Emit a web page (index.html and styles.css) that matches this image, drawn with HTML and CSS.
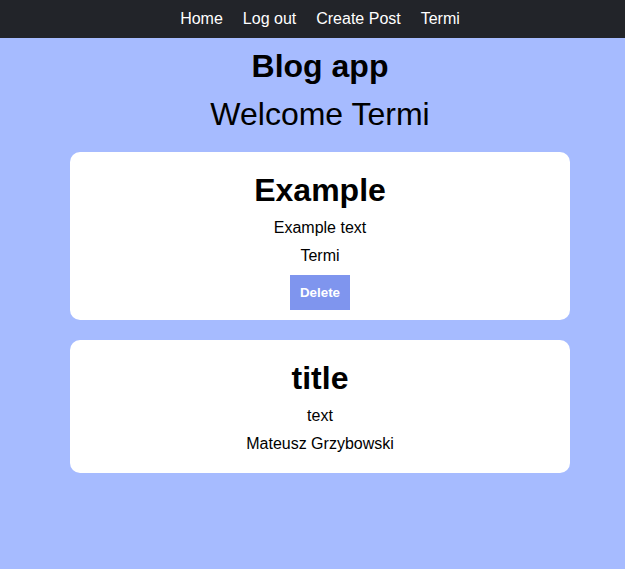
FILE: index.html
```html
<!DOCTYPE html>
<html>
<head>
<meta charset="utf-8">
<link rel="stylesheet" href="styles.css">
</head>
<body>
<div class="page">
  <nav class="nav">
    <a class="nav-link" href="#">Home</a>
    <a class="nav-link" href="#">Log out</a>
    <a class="nav-link" href="#">Create Post</a>
    <a class="nav-link" href="#">Termi</a>
  </nav>
  <main class="main">
    <h1 class="app-title">Blog app</h1>
    <h2 class="welcome">Welcome Termi</h2>
    <div class="card">
      <h1 class="post-title">Example</h1>
      <p class="post-text">Example text</p>
      <p class="post-author">Termi</p>
      <button class="delete-btn">Delete</button>
    </div>
    <div class="card">
      <h1 class="post-title">title</h1>
      <p class="post-text">text</p>
      <p class="post-author">Mateusz Grzybowski</p>
    </div>
  </main>
</div>
</body>
</html>
```

FILE: styles.css
```css
html, body {
  margin: 0;
  padding: 0;
  background: #a6bbff;
  font-family: "Liberation Sans", Arial, sans-serif;
  color: #000;
}
.page {
  min-width: 640px;
  min-height: 569px;
  background: #a6bbff;
}
.nav {
  height: 38px;
  background: #222429;
  display: flex;
  justify-content: center;
  align-items: center;
  gap: 20px;
}
.nav-link {
  color: #fff;
  text-decoration: none;
  font-size: 16px;
}
.main {
  display: flex;
  flex-direction: column;
  align-items: center;
}
.app-title {
  font-size: 32px;
  font-weight: bold;
  margin: 10px 0 0;
}
.welcome {
  font-size: 32px;
  font-weight: normal;
  margin: 11px 0 19px;
}
.card {
  width: 500px;
  box-sizing: border-box;
  background: #fff;
  border-radius: 10px;
  padding: 10px 0;
  margin-bottom: 20px;
  text-align: center;
  display: flow-root;
}
.post-title {
  font-size: 32px;
  margin: 10px 0;
}
.post-text, .post-author {
  font-size: 16px;
  margin: 10px 0;
}
.delete-btn {
  display: block;
  margin: 10px auto 0;
  width: 60px;
  height: 35px;
  border: none;
  background: #7f95ee;
  color: #fff;
  font-family: "Liberation Sans", Arial, sans-serif;
  font-weight: bold;
  font-size: 13.33px;
  padding: 0;
}
```
